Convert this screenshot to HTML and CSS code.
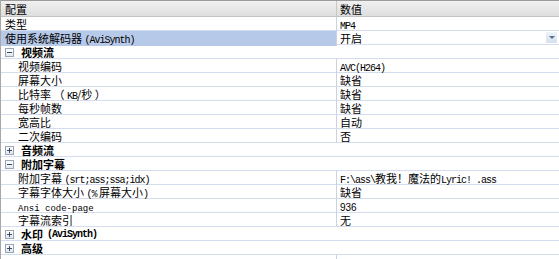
FILE: index.html
```html
<!DOCTYPE html>
<html lang="zh">
<head>
    <meta charset="UTF-8">
    <title>配置</title>
    <link rel="stylesheet" href="styles.css">
</head>
<body>
    <div class="grid">
        <div class="head">
            <div class="cell">配置</div>
            <div class="cell val">数值</div>
        </div>
        <div class="row">
            <div class="cell">类型</div>
            <div class="cell val"><span class="en">MP4</span></div>
        </div>
        <div class="row selected">
            <div class="cell">使用系统解码器 <span class="en">(AviSynth)</span></div>
            <div class="cell val">开启<span class="drop"></span></div>
        </div>
        <div class="row group">
            <div class="cell"><span class="box minus"></span>视频流</div>
        </div>
        <div class="row child">
            <div class="cell">视频编码</div>
            <div class="cell val"><span class="en">AVC(H264)</span></div>
        </div>
        <div class="row child">
            <div class="cell">屏幕大小</div>
            <div class="cell val">缺省</div>
        </div>
        <div class="row child">
            <div class="cell">比特率 （ <span class="en">KB</span>/秒 ）</div>
            <div class="cell val">缺省</div>
        </div>
        <div class="row child">
            <div class="cell">每秒帧数</div>
            <div class="cell val">缺省</div>
        </div>
        <div class="row child">
            <div class="cell">宽高比</div>
            <div class="cell val">自动</div>
        </div>
        <div class="row child">
            <div class="cell">二次编码</div>
            <div class="cell val">否</div>
        </div>
        <div class="row group">
            <div class="cell"><span class="box plus"></span>音频流</div>
        </div>
        <div class="row group">
            <div class="cell"><span class="box minus"></span>附加字幕</div>
        </div>
        <div class="row child">
            <div class="cell">附加字幕 <span class="en">(srt;ass;ssa;idx)</span></div>
            <div class="cell val"><span class="en">F:\ass\</span>教我！魔法的<span class="en">Lyric! .ass</span></div>
        </div>
        <div class="row child">
            <div class="cell">字幕字体大小 <span class="en">(%</span> 屏幕大小<span class="en">)</span></div>
            <div class="cell val">缺省</div>
        </div>
        <div class="row child">
            <div class="cell"><span class="tiny">Ansi code-page</span></div>
            <div class="cell val"><span class="digits">936</span></div>
        </div>
        <div class="row child">
            <div class="cell">字幕流索引</div>
            <div class="cell val">无</div>
        </div>
        <div class="row group">
            <div class="cell"><span class="box plus"></span>水印 <span class="en">(AviSynth)</span></div>
        </div>
        <div class="row group">
            <div class="cell"><span class="box plus"></span>高级</div>
        </div>
        <div class="row">
            <div class="cell"></div>
            <div class="cell val"></div>
        </div>
    </div>
</body>
</html>
```

FILE: styles.css
```css
body {
    margin: 0;
    background: #fff;
    font-family: "Noto Sans CJK SC", sans-serif;
    font-size: 11px;
    color: #000;
    overflow: hidden;
}
.grid {
    width: 559px;
    height: 259px;
    border-left: 1px solid #a8a8a8;
    box-sizing: border-box;
    overflow: hidden;
}
.head,
.row {
    display: grid;
    grid-template-columns: 335px 1fr;
}
.head {
    height: 17px;
    background: linear-gradient(#f0f0f0, #dedede);
    border-top: 1px solid #9a9a9a;
    border-bottom: 1px solid #c4c4c4;
    box-sizing: border-box;
}
.head .cell {
    padding-top: 2px;
    line-height: 13px;
}
.head .val {
    border-left: 1px solid #c8c8c8;
}
.row {
    height: 14px;
    border-bottom: 1px solid #d4ddee;
    box-sizing: border-box;
}
.cell {
    padding-top: 2px;
    padding-left: 4px;
    line-height: 11px;
    white-space: nowrap;
}
.val {
    position: relative;
    border-left: 1px solid #c9d3e6;
    padding-left: 3px;
}
.child .cell:first-child {
    padding-left: 17px;
}
.selected .cell:first-child {
    background: #b6c9e8;
}
.group {
    display: block;
    font-weight: bold;
}
.group .cell {
    display: flex;
    align-items: center;
    height: 11px;
    padding-left: 4px;
}
.box {
    position: relative;
    width: 7px;
    height: 7px;
    margin-right: 7px;
    border: 1px solid #9aa6b6;
    background: linear-gradient(#ffffff, #e2e6ec);
}
.box::before,
.box::after {
    content: "";
    position: absolute;
    background: #3a4a66;
}
.box::before {
    left: 1px;
    top: 3px;
    width: 5px;
    height: 1px;
}
.plus::after {
    left: 3px;
    top: 1px;
    width: 1px;
    height: 5px;
}
.en {
    font-family: "Liberation Mono", monospace;
    font-size: 10px;
    letter-spacing: -1px;
    font-weight: normal;
}
.group .en {
    font-weight: bold;
    margin-left: 4px;
}
.tiny {
    font-family: "Liberation Mono", monospace;
    font-size: 9px;
}
.digits {
    font-family: "Liberation Sans", sans-serif;
    font-size: 10px;
}
.drop {
    position: absolute;
    right: 2px;
    top: 1px;
    width: 11px;
    height: 11px;
    background: linear-gradient(#eef3fa, #d4dfee);
}
.drop::after {
    content: "";
    position: absolute;
    left: 3px;
    top: 4px;
    border-left: 3px solid transparent;
    border-right: 3px solid transparent;
    border-top: 3px solid #5a6e8e;
}
```
